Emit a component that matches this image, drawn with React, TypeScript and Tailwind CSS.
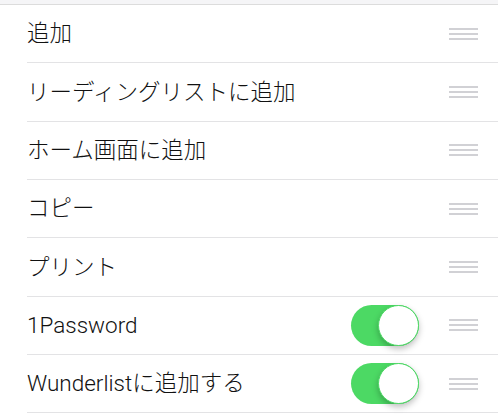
import * as React from "react";

type Row = { label: string; toggle?: boolean };

const rows: Row[] = [
  { label: "追加" },
  { label: "リーディングリストに追加" },
  { label: "ホーム画面に追加" },
  { label: "コピー" },
  { label: "プリント" },
  { label: "1Password", toggle: true },
  { label: "Wunderlistに追加する", toggle: true }
];

const Handle = () => (
  <div className="flex w-[29px] flex-col gap-[3px]">
    <span className="h-[2px] w-full bg-[#d1d1d5]" />
    <span className="h-[2px] w-full bg-[#d1d1d5]" />
    <span className="h-[2px] w-full bg-[#d1d1d5]" />
  </div>
);

const Switch = () => (
  <div className="relative h-[41px] w-[68px] rounded-full bg-[#4cd964]">
    <span className="absolute right-0 top-0 h-[41px] w-[41px] rounded-full border border-[#4cd964] bg-white shadow-[0_3px_6px_rgba(0,0,0,0.25)]" />
  </div>
);

export default function App() {
  return (
    <div
      className="h-[420px] w-[498px] overflow-hidden bg-white text-[#111]"
      style={{ fontFamily: 'Roboto, "Noto Sans CJK JP", sans-serif' }}
    >
      <div className="h-[5px] border-b border-[#dcdcdc] bg-[#f5f5f7]" />
      <ul className="pl-[27px]">
        {rows.map((row) => (
          <li
            key={row.label}
            className="flex h-[58.33px] items-center border-b border-[#e3e3e5] pr-[20px]"
          >
            <span className="flex-1 text-[22.5px] font-light leading-none">{row.label}</span>
            {row.toggle && (
              <div className="mr-[30px]">
                <Switch />
              </div>
            )}
            <Handle />
          </li>
        ))}
      </ul>
    </div>
  );
}
